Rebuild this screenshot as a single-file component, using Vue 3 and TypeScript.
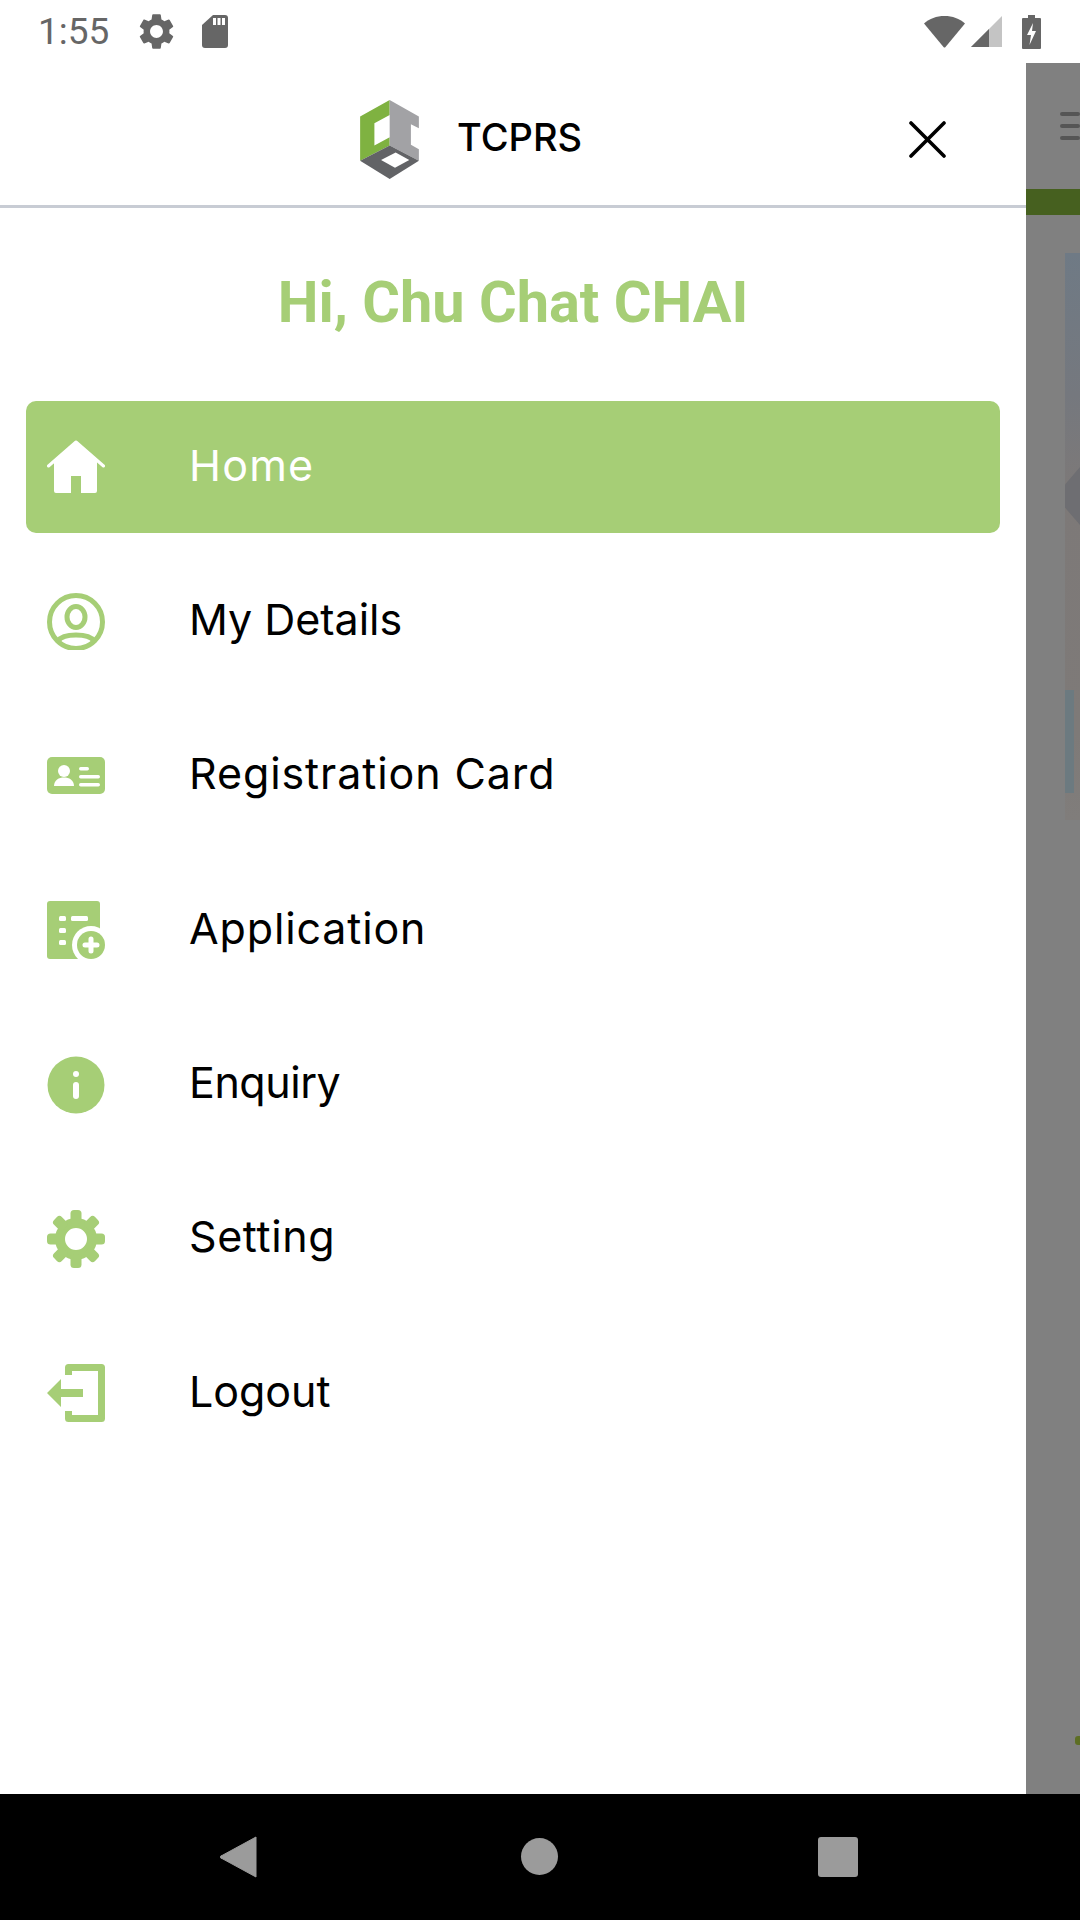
<script setup lang="ts">
interface MenuItem {
  label: string;
  icon: string;
  tracking: number;
}

const menu: MenuItem[] = [
  { label: 'Home', icon: 'home', tracking: 1.2 },
  { label: 'My Details', icon: 'user', tracking: -0.03 },
  { label: 'Registration Card', icon: 'card', tracking: 0.9 },
  { label: 'Application', icon: 'application', tracking: 0.85 },
  { label: 'Enquiry', icon: 'info', tracking: -0.45 },
  { label: 'Setting', icon: 'gear', tracking: 0.6 },
  { label: 'Logout', icon: 'logout', tracking: -0.05 }
];

const gearPath =
  'M19.14 12.94c.04-.3.06-.61.06-.94 0-.32-.02-.64-.07-.94l2.03-1.58a.49.49 0 0 0 .12-.61l-1.92-3.32a.488.488 0 0 0-.59-.22l-2.39.96c-.5-.38-1.03-.7-1.62-.94l-.36-2.54a.484.484 0 0 0-.48-.41h-3.84c-.24 0-.43.17-.47.41l-.36 2.54c-.59.24-1.13.57-1.62.94l-2.39-.96c-.22-.08-.47 0-.59.22L2.74 8.87c-.12.21-.08.47.12.61l2.03 1.58c-.05.3-.09.63-.09.94s.02.64.07.94l-2.03 1.58a.49.49 0 0 0-.12.61l1.92 3.32c.12.22.37.29.59.22l2.39-.96c.5.38 1.03.7 1.62.94l.36 2.54c.05.24.24.41.48.41h3.84c.24 0 .44-.17.47-.41l.36-2.54c.59-.24 1.13-.56 1.62-.94l2.39.96c.22.08.47 0 .59-.22l1.92-3.32c.12-.22.07-.47-.12-.61l-2.01-1.58zM12 15.6c-1.98 0-3.6-1.62-3.6-3.6s1.62-3.6 3.6-3.6 3.6 1.62 3.6 3.6-1.62 3.6-3.6 3.6z';

const teeth = [0, 45, 90, 135, 180, 225, 270, 315];
</script>

<template>
  <div class="screen">
    <div class="status-bar">
      <span class="time">1:55</span>
      <svg class="st-gear" viewBox="0 0 24 24"><path :d="gearPath" fill="#666" /></svg>
      <svg class="st-sd" viewBox="0 0 26 33">
        <path d="M11 0H23a3 3 0 0 1 3 3V30a3 3 0 0 1-3 3H3a3 3 0 0 1-3-3V10z" fill="#666" />
        <rect x="11" y="3" width="3" height="7" fill="#fff" />
        <rect x="15.5" y="3" width="3" height="7" fill="#fff" />
        <rect x="20" y="3" width="3" height="7" fill="#fff" />
      </svg>
      <span class="spacer"></span>
      <svg class="st-wifi" viewBox="0 0 41 32">
        <path d="M0 7.5C5.5 2.5 12.5 0 20.5 0S35.500 2.500 41 7.500L21.500 31a1.300 1.300 0 0 1-2 0z" fill="#666" />
      </svg>
      <svg class="st-signal" viewBox="0 0 31 31">
        <path d="M31 0V31H0z" fill="#c4c4c4" />
        <path d="M18 13V31H0z" fill="#666" />
      </svg>
      <svg class="st-battery" viewBox="0 0 19 34">
        <path d="M6 0H13V3H18a1 1 0 0 1 1 1V33a1 1 0 0 1-1 1H1a1 1 0 0 1-1-1V4a1 1 0 0 1 1-1H6z" fill="#666" />
        <path d="M11 8L5 20H9L7.500 30L14 16H10z" fill="#fff" />
      </svg>
    </div>

    <div class="main">
      <aside class="drawer">
        <header class="drawer-head">
          <div class="brand">
            <svg class="logo" viewBox="17 15 177 238">
              <path d="M17 65L106 15V60L60 85V152L106 127V152L17 198z" fill="#7fb241" />
              <path d="M106 15L194 65V100L170 88V150L194 163V198L106 152z" fill="#a2a2a5" />
              <path d="M17 198L106 152L194 198L106 253z" fill="#626366" />
              <path d="M80 196L124 173L165 196L122 219z" fill="#fff" />
            </svg>
            <span class="brand-name">TCPRS</span>
          </div>
          <svg class="close" viewBox="0 0 37 37">
            <path d="M2 2L35 35M35 2L2 35" stroke="#000" stroke-width="3.600" stroke-linecap="round" />
          </svg>
        </header>

        <h1 class="greeting">Hi, Chu Chat CHAI</h1>

        <nav class="menu">
          <a v-for="(item, i) in menu" :key="item.label" :class="['menu-item', { active: i === 0 }]">
            <svg class="icon" viewBox="0 0 58 58">
              <g v-if="item.icon === 'home'">
                <path d="M1.500 28L29 4L56.500 28" fill="none" stroke="currentColor" stroke-width="3" stroke-linejoin="round" stroke-linecap="round" />
                <path fill-rule="evenodd" d="M29 3L50 22V53a2 2 0 0 1-2 2H9a2 2 0 0 1-2-2V22zM24 38V55H34V38z" fill="currentColor" />
              </g>
              <g v-else-if="item.icon === 'user'">
                <circle cx="29" cy="30" r="26.500" fill="none" stroke="currentColor" stroke-width="5" />
                <ellipse cx="29" cy="25" rx="9" ry="10.500" fill="none" stroke="currentColor" stroke-width="5" />
                <path d="M11 49C16 41 42 41 47 49" fill="none" stroke="currentColor" stroke-width="5" />
              </g>
              <g v-else-if="item.icon === 'card'">
                <rect x="0" y="10" width="58" height="37" rx="5" fill="currentColor" />
                <circle cx="17" cy="24" r="6" fill="#fff" />
                <path d="M7 39C7 33 12 30.500 17 30.500S27 33 27 39z" fill="#fff" />
                <rect x="32" y="20" width="10" height="3.500" rx="1.700" fill="#fff" />
                <rect x="32" y="28" width="21" height="3.500" rx="1.700" fill="#fff" />
                <rect x="32" y="36" width="21" height="3.500" rx="1.700" fill="#fff" />
              </g>
              <g v-else-if="item.icon === 'application'">
                <path d="M3 0H50a3 3 0 0 1 3 3V58H3a3 3 0 0 1-3-3V3a3 3 0 0 1 3-3z" fill="currentColor" />
                <circle cx="44" cy="44" r="19" fill="#fff" />
                <rect x="53" y="0" width="5" height="25" fill="#fff" />
                <circle cx="44" cy="44" r="14" fill="currentColor" />
                <path d="M44 38V50M38 44H50" stroke="#fff" stroke-width="5" stroke-linecap="round" />
                <g fill="#fff">
                  <rect x="12" y="15" width="7" height="5" rx="1.500" />
                  <rect x="24" y="15" width="17" height="5" rx="1.500" />
                  <rect x="12" y="27" width="7" height="5" rx="1.500" />
                  <rect x="12" y="39" width="7" height="5" rx="1.500" />
                </g>
              </g>
              <g v-else-if="item.icon === 'info'">
                <circle cx="29" cy="29" r="28.500" fill="currentColor" />
                <circle cx="29" cy="18" r="3" fill="#fff" />
                <rect x="26" y="26" width="6" height="17" rx="3" fill="#fff" />
              </g>
              <g v-else-if="item.icon === 'gear'">
                <circle cx="29" cy="29" r="16" fill="none" stroke="currentColor" stroke-width="10" />
                <rect
                  v-for="a in teeth"
                  :key="a"
                  x="23.500"
                  y="0"
                  width="11"
                  height="14"
                  rx="3.500"
                  fill="currentColor"
                  :transform="`rotate(${a} 29 29)`"
                />
              </g>
              <g v-else>
                <path d="M21.500 11V3.500H54.500V54.500H21.500V47" fill="none" stroke="currentColor" stroke-width="7" stroke-linejoin="round" />
                <path d="M0 29L14 15V25H36V33H14V43z" fill="currentColor" />
              </g>
            </svg>
            <span class="menu-label" :style="{ letterSpacing: item.tracking + 'px' }">{{ item.label }}</span>
          </a>
        </nav>
      </aside>

      <div class="scrim">
        <div class="hamburger"><i></i><i></i><i></i></div>
        <div class="band"></div>
        <div class="hero">
          <span class="hero-shape"></span>
          <span class="hero-strip"></span>
        </div>
        <span class="speck"></span>
      </div>
    </div>

    <div class="nav-bar">
      <svg class="nav-back" viewBox="0 0 37 42"><path d="M36 1V41L2 22.500a1.500 1.500 0 0 1 0-3z" fill="#9b9b9b" stroke="#9b9b9b" stroke-width="1" stroke-linejoin="round" /></svg>
      <span class="nav-home"></span>
      <span class="nav-recent"></span>
    </div>
  </div>
</template>

<style scoped>
.screen {
  width: 1080px;
  height: 1920px;
  display: flex;
  flex-direction: column;
  background: #fff;
  overflow: hidden;
  font-family: Inter, 'Noto Sans', sans-serif;
}

.status-bar {
  height: 63px;
  display: flex;
  align-items: center;
  padding: 0 39px 0 38px;
  background: #fff;
}

.time {
  font-family: Roboto, sans-serif;
  font-size: 37px;
  color: #666;
  width: 97px;
}

.st-gear {
  width: 43px;
  height: 43px;
}

.st-sd {
  width: 26px;
  height: 33px;
  margin-left: 24px;
}

.spacer {
  flex: 1;
}

.st-wifi {
  width: 41px;
  height: 32px;
}

.st-signal {
  width: 31px;
  height: 31px;
  margin-left: 6px;
}

.st-battery {
  width: 19px;
  height: 34px;
  margin-left: 20px;
}

.main {
  flex: 1;
  display: flex;
  min-height: 0;
}

.drawer {
  width: 1026px;
  background: #fff;
}

.drawer-head {
  height: 145px;
  box-sizing: border-box;
  border-bottom: 3px solid #c8ccd4;
  display: flex;
  align-items: center;
  position: relative;
  padding-left: 360px;
}

.brand {
  display: flex;
  align-items: center;
  gap: 38px;
}

.logo {
  width: 59px;
  height: 79px;
  margin-top: 11px;
}

.brand-name {
  font-size: 38px;
  font-weight: 500;
  color: #000;
  margin-top: 5px;
}

.close {
  position: absolute;
  left: 909px;
  top: 58px;
  width: 37px;
  height: 37px;
}

.greeting {
  margin: 0;
  padding-top: 61px;
  height: 193px;
  box-sizing: border-box;
  text-align: center;
  font-family: Roboto, sans-serif;
  font-weight: 700;
  font-size: 57.700px;
  line-height: 66px;
  color: #a6ce76;
}

.menu {
  display: flex;
  flex-direction: column;
  gap: 22.400px;
  padding: 0 26px;
}

.menu-item {
  height: 132px;
  display: flex;
  align-items: center;
  gap: 84px;
  padding-left: 21px;
  border-radius: 10px;
  color: #a6ce76;
}

.menu-item.active {
  background: #a6ce76;
  color: #fff;
}

.icon {
  width: 58px;
  height: 58px;
  flex: none;
}

.menu-label {
  font-size: 43px;
  color: #000;
  margin-top: -5px;
}

.active .menu-label {
  color: #fff;
}

.scrim {
  flex: 1;
  background: #808080;
  display: flex;
  flex-direction: column;
  overflow: hidden;
  position: relative;
}

.hamburger {
  display: flex;
  flex-direction: column;
  gap: 8px;
  padding: 49px 0 0 34px;
  height: 126px;
  box-sizing: border-box;
}

.hamburger i {
  height: 4px;
  background: #555;
  border-radius: 2px;
}

.band {
  height: 26px;
  background: #46601f;
}

.hero {
  position: relative;
  margin: 38px 0 0 39px;
  height: 567px;
  background: linear-gradient(#6f7a85 0%, #75787e 25%, #7d7978 42%, #7e7a78 85%, #807d7b 100%);
}

.hero-shape {
  position: absolute;
  left: 0;
  top: 214px;
  width: 100%;
  height: 58px;
  background: #6e6e72;
  clip-path: polygon(0 30%, 100% 0, 100% 100%, 0 70%);
}

.hero-strip {
  position: absolute;
  left: 0;
  top: 437px;
  width: 9px;
  height: 103px;
  background: #6c7a80;
}

.speck {
  position: absolute;
  right: 0;
  top: 1673px;
  width: 5px;
  height: 9px;
  background: #5d6e24;
  border-radius: 3px 0 0 3px;
}

.nav-bar {
  height: 126px;
  background: #000;
  position: relative;
}

.nav-back {
  position: absolute;
  left: 220px;
  top: 42px;
  width: 37px;
  height: 42px;
}

.nav-home {
  position: absolute;
  left: 521px;
  top: 44px;
  width: 37px;
  height: 37px;
  border-radius: 50%;
  background: #9b9b9b;
}

.nav-recent {
  position: absolute;
  left: 818px;
  top: 43px;
  width: 40px;
  height: 40px;
  border-radius: 3px;
  background: #9b9b9b;
}
</style>
